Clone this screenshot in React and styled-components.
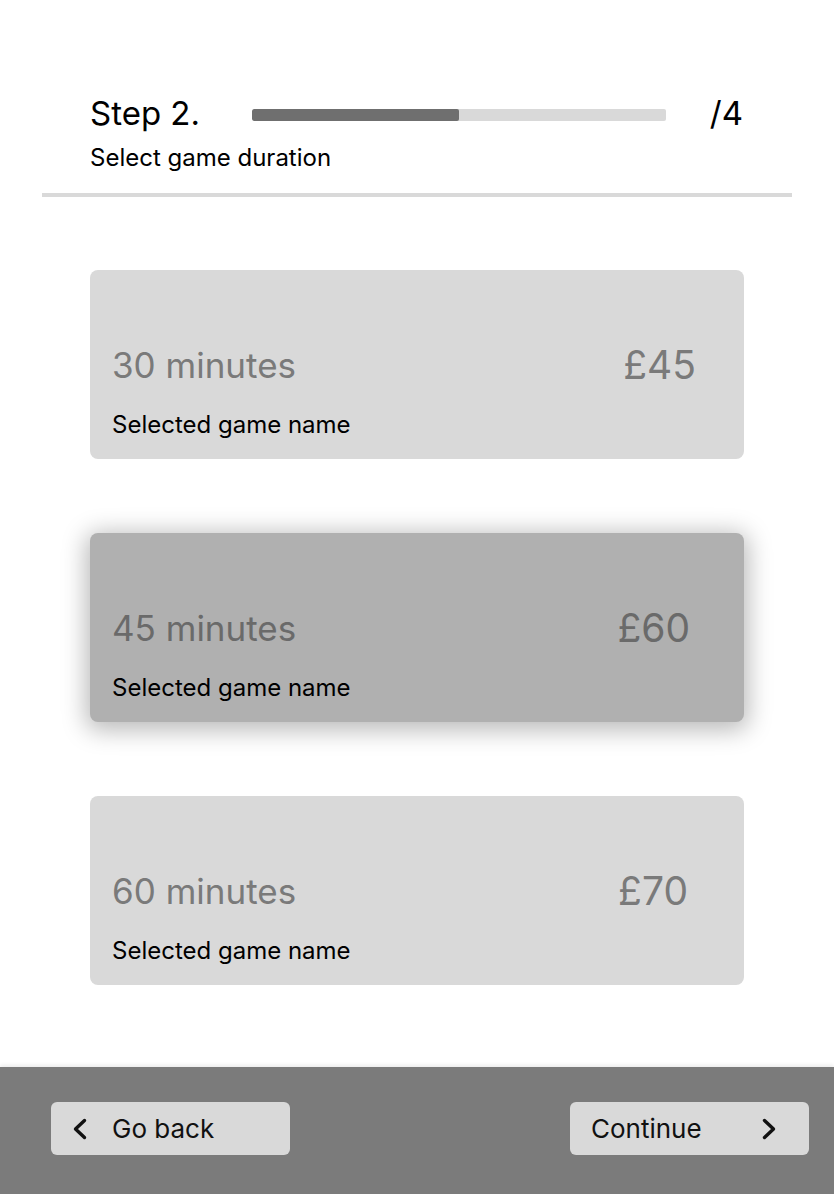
import React from "react";
import styled, { createGlobalStyle } from "styled-components";

const options = [
  { minutes: 30, price: 45, nudge: 0 },
  { minutes: 45, price: 60, nudge: 6, selected: true },
  { minutes: 60, price: 70, nudge: 8 },
];

const App = () => {
  return (
    <>
      <GlobalStyle />
      <Page>
        <Header>
          <StepRow>
            <StepTitle>Step 2.</StepTitle>
            <Progress>
              <ProgressFill style={{ width: `${(2 / 4) * 100}%` }} />
            </Progress>
            <StepCount>/4</StepCount>
          </StepRow>
          <Subtitle>Select game duration</Subtitle>
        </Header>
        <Divider />
        <OptionList>
          {options.map((o) => (
            <OptionCard key={o.minutes} $selected={o.selected}>
              <OptionTop>
                <Duration $selected={o.selected}>{o.minutes} minutes</Duration>
                <Price $selected={o.selected} $nudge={o.nudge}>
                  £{o.price}
                </Price>
              </OptionTop>
              <GameName>Selected game name</GameName>
            </OptionCard>
          ))}
        </OptionList>
        <Footer>
          <NavButton>
            <Chevron dir="left" />
            <span>Go back</span>
          </NavButton>
          <NavButton $next>
            <span>Continue</span>
            <Chevron dir="right" />
          </NavButton>
        </Footer>
      </Page>
    </>
  );
};

const Chevron = ({ dir }) => (
  <ChevronSvg viewBox="0 0 16 24" width="16" height="24">
    <path
      d={dir === "left" ? "M12.5 3.5 L3.5 12 L12.5 20.5" : "M3.5 3.5 L12.5 12 L3.5 20.5"}
      fill="none"
      stroke="#111"
      strokeWidth="3.4"
      strokeLinecap="round"
      strokeLinejoin="round"
    />
  </ChevronSvg>
);

export default App;

const GlobalStyle = createGlobalStyle`
  body {
    margin: 0;
    background: #ffffff;
    font-family: Inter, "Noto Sans", sans-serif;
    color: #000;
  }
`;

const Page = styled.div`
  min-height: 1194px;
  display: flex;
  flex-direction: column;
`;

const Header = styled.div`
  padding: 93px 91px 0 90px;
`;

const StepRow = styled.div`
  display: flex;
  align-items: center;
`;

const StepTitle = styled.div`
  font-size: 33px;
  line-height: 40px;
  width: 162px;
`;

const Progress = styled.div`
  width: 414px;
  height: 12px;
  background: #d9d9d9;
  border-radius: 2px;
  overflow: hidden;
  margin-top: 4px;
`;

const ProgressFill = styled.div`
  height: 100%;
  background: #6f6f6f;
  border-radius: 2px;
`;

const StepCount = styled.div`
  margin-left: auto;
  font-size: 33px;
  line-height: 40px;
`;

const Subtitle = styled.div`
  font-size: 24px;
  line-height: 29px;
  margin-top: 10px;
`;

const Divider = styled.div`
  height: 4px;
  background: #d9d9d9;
  margin: 21px 42px 0;
`;

const OptionList = styled.div`
  display: flex;
  flex-direction: column;
  gap: 74px;
  padding: 73px 90px 0;
`;

const OptionCard = styled.div`
  height: 189px;
  box-sizing: border-box;
  border-radius: 8px;
  background: ${(p) => (p.$selected ? "#b0b0b0" : "#d9d9d9")};
  box-shadow: ${(p) =>
    p.$selected ? "0 4px 24px 4px rgba(0, 0, 0, 0.28)" : "none"};
  padding: 71px 48px 0 22px;
  display: flex;
  flex-direction: column;
`;

const OptionTop = styled.div`
  display: flex;
  align-items: center;
  justify-content: space-between;
`;

const Duration = styled.div`
  font-size: 35px;
  line-height: 48px;
  color: ${(p) => (p.$selected ? "#6a6a6a" : "#7a7a7a")};
`;

const Price = styled.div`
  font-size: 39px;
  line-height: 48px;
  margin-right: ${(p) => p.$nudge}px;
  color: ${(p) => (p.$selected ? "#6a6a6a" : "#7a7a7a")};
`;

const GameName = styled.div`
  font-size: 24px;
  line-height: 28px;
  margin-top: 22px;
`;

const Footer = styled.div`
  margin-top: auto;
  height: 127px;
  box-sizing: border-box;
  background: #7b7b7b;
  box-shadow: 0 -2px 4px rgba(0, 0, 0, 0.08);
  display: flex;
  align-items: center;
  justify-content: space-between;
  padding: 0 25px 4px 51px;
`;

const NavButton = styled.button`
  width: 239px;
  height: 53px;
  border: none;
  border-radius: 6px;
  background: #d9d9d9;
  font-family: Inter, "Noto Sans", sans-serif;
  font-size: 26px;
  color: #111;
  display: flex;
  align-items: center;
  justify-content: ${(p) => (p.$next ? "space-between" : "flex-start")};
  gap: 24px;
  padding: 0 ${(p) => (p.$next ? "32px" : "0")} 0 21px;
`;

const ChevronSvg = styled.svg`
  flex: none;
`;
